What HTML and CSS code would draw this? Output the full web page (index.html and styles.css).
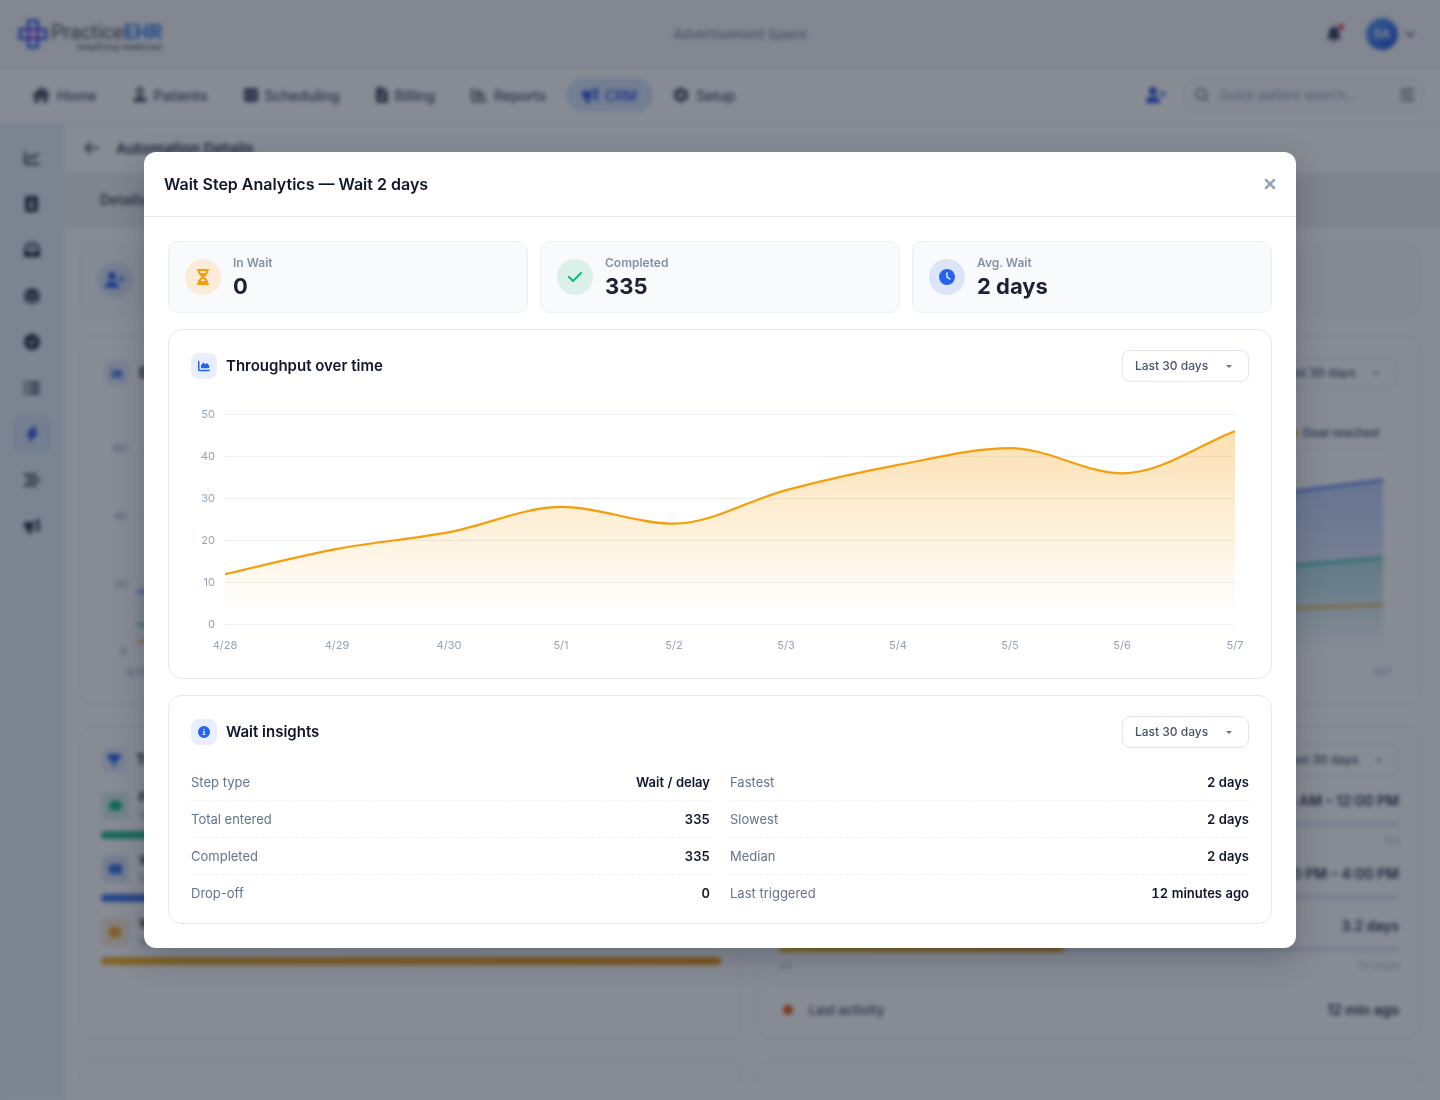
FILE: index.html
```
<!DOCTYPE html>
<html lang="en">
<head>
    <meta charset="UTF-8">
    <meta name="viewport" content="width=device-width, initial-scale=1.0">
    <title>Practice EHR - Automation Details</title>
    <link rel="stylesheet" href="styles.css">
</head>
<body>

<!-- icons -->
<svg class="sprite" aria-hidden="true">
    <symbol id="i-hourglass" viewBox="0 0 384 512"><path d="M32 0C14.3 0 0 14.3 0 32S14.3 64 32 64l0 11c0 42.4 16.9 83.1 46.9 113.1L146.7 256 78.9 323.9C48.9 353.9 32 394.6 32 437l0 11c-17.7 0-32 14.3-32 32s14.3 32 32 32l320 0c17.7 0 32-14.3 32-32s-14.3-32-32-32l0-11c0-42.4-16.9-83.1-46.9-113.1L237.3 256l67.9-67.9c30-30 46.9-70.7 46.9-113.1l0-11c17.7 0 32-14.3 32-32s-14.3-32-32-32L32 0zM96 75l0-11 192 0 0 11c0 19-5.6 37.4-16 53L112 128c-10.3-15.6-16-34-16-53zm16 309c3.5-5.3 7.6-10.3 12.1-14.9L192 301.3l67.9 67.9c4.6 4.6 8.6 9.6 12.1 14.9L112 384z"/></symbol>
    <symbol id="i-check" viewBox="0 0 448 512"><path d="M438.6 105.4c12.5 12.5 12.5 32.8 0 45.3l-256 256c-12.5 12.5-32.8 12.5-45.3 0l-128-128c-12.5-12.5-12.5-32.8 0-45.3s32.8-12.5 45.3 0L160 338.7 393.4 105.4c12.5-12.5 32.8-12.5 45.3 0z"/></symbol>
    <symbol id="i-clock" viewBox="0 0 512 512"><path d="M256 0a256 256 0 1 1 0 512A256 256 0 1 1 256 0zM232 120l0 136c0 8 4 15.5 10.7 20l96 64c11 7.4 25.9 4.4 33.3-6.7s4.4-25.9-6.7-33.3L280 243.2 280 120c0-13.3-10.7-24-24-24s-24 10.7-24 24z"/></symbol>
    <symbol id="i-area" viewBox="0 0 512 512"><path d="M64 64c0-17.7-14.3-32-32-32S0 46.3 0 64L0 400c0 44.2 35.8 80 80 80l400 0c17.7 0 32-14.3 32-32s-14.3-32-32-32L80 416c-8.8 0-16-7.2-16-16L64 64zm96 288l288 0c17.7 0 32-14.3 32-32l0-68.2c0-7.6-2.7-15-7.7-20.8l-65.8-76.8c-12.1-14.2-33.7-15-46.9-1.8l-21 21c-10 10-26.4 9.2-35.4-1.6l-39.2-47c-12.6-15.1-35.7-15.4-48.7-.6L135.9 215c-5.1 5.8-7.9 13.3-7.9 21.1l0 84c0 17.7 14.3 32 32 32z"/></symbol>
    <symbol id="i-info" viewBox="0 0 512 512"><path d="M256 512A256 256 0 1 0 256 0a256 256 0 1 0 0 512zM216 336l24 0 0-64-24 0c-13.3 0-24-10.7-24-24s10.7-24 24-24l48 0c13.3 0 24 10.7 24 24l0 88 8 0c13.3 0 24 10.7 24 24s-10.7 24-24 24l-80 0c-13.3 0-24-10.7-24-24s10.7-24 24-24zm40-208a32 32 0 1 1 0 64 32 32 0 1 1 0-64z"/></symbol>
    <symbol id="i-user-plus" viewBox="0 0 640 512"><path d="M96 128a128 128 0 1 1 256 0A128 128 0 1 1 96 128zM0 482.3C0 383.8 79.8 304 178.3 304l91.4 0C368.2 304 448 383.8 448 482.3c0 16.4-13.3 29.7-29.7 29.7L29.7 512C13.3 512 0 498.7 0 482.3zM504 312l0-64-64 0c-13.3 0-24-10.7-24-24s10.7-24 24-24l64 0 0-64c0-13.3 10.7-24 24-24s24 10.7 24 24l0 64 64 0c13.3 0 24 10.7 24 24s-10.7 24-24 24l-64 0 0 64c0 13.3-10.7 24-24 24s-24-10.7-24-24z"/></symbol>
    <symbol id="i-home" viewBox="0 0 18 16"><path d="M9 0 0 8q.3 1 1.500 1H2.500v5.500Q2.500 16 4 16h3v-5h4v5h3q1.500 0 1.500-1.500V9h1q1.200 0 1.500-1L15 5.300V1.500h-2v2z"/></symbol>
    <symbol id="i-patient" viewBox="0 0 14 16"><circle cx="7" cy="4" r="3" fill="none" stroke="currentColor" stroke-width="2"/><path d="M6 7h2v3h2q4 1 4 5H0q0-4 4-5h2z"/></symbol>
    <symbol id="i-calendar" viewBox="0 0 14 16"><path d="M2 1h10q2 0 2 2v10q0 2-2 2H2q-2 0-2-2V3q0-2 2-2zm1 5v1h3V6zm5 0v1h3V6zm-5 4v1h3v-1zm5 0v1h3v-1z" fill-rule="evenodd"/></symbol>
    <symbol id="i-file" viewBox="0 0 12 16"><path d="M2 0h5v5h5v9q0 2-2 2H2q-2 0-2-2V2q0-2 2-2zm6 0 4 4H8zM5 8v5h2V8z" fill-rule="evenodd"/></symbol>
    <symbol id="i-chart" viewBox="0 0 16 16"><path d="M1 2v10q0 2 2 2h12M5 4h4M5 7h7M5 10h5M13 9v2" fill="none" stroke="currentColor" stroke-width="2" stroke-linecap="round"/></symbol>
    <symbol id="i-line" viewBox="0 0 16 16"><path d="M1 2v10q0 2 2 2h12M4 9l3-3 2.500 2L14 4" fill="none" stroke="currentColor" stroke-width="2" stroke-linecap="round"/></symbol>
    <symbol id="i-horn" viewBox="0 0 16 16"><path d="M2 4h6q4 0 6-3.500 1.500 0 1.500 1V13q0 1-1.500 1-2-3.500-6-3.500H7l1 4.500q0 1-1 1H5q-1 0-1-1l-1-4.500H2q-2 0-2-2V6q0-2 2-2zm11 0q-2 2-4.500 2v3Q11 9 13 11z" fill-rule="evenodd"/></symbol>
    <symbol id="i-gear" viewBox="0 0 16 16"><path d="M6.500 0h3l.5 2.300 2 1.100 2.200-.7 1.500 2.600L14 7v2l1.700 1.700-1.500 2.600-2.200-.7-2 1.100-.5 2.300h-3L6 13.700l-2-1.100-2.200.7-1.500-2.600L2 9V7L.3 5.300l1.500-2.600 2.200.7 2-1.100zM8 5.400a2.600 2.600 0 1 0 0 5.200 2.600 2.600 0 1 0 0-5.200z"/></symbol>
    <symbol id="i-bell" viewBox="0 0 14 16"><path d="M7 0q1 0 1 1.200Q12 2 12 7q0 3 2 5v1H0v-1q2-2 2-5 0-5 4-5.800Q6 0 7 0zM5 14h4q0 2-2 2t-2-2z"/></symbol>
    <symbol id="i-down" viewBox="0 0 12 12"><path d="M2 4l4 4 4-4" fill="none" stroke="currentColor" stroke-width="2"/></symbol>
    <symbol id="i-search" viewBox="0 0 14 14"><path d="M6 1a5 5 0 1 1 0 10A5 5 0 0 1 6 1zM9.500 9.500 13 13" fill="none" stroke="currentColor" stroke-width="2"/></symbol>
    <symbol id="i-sliders" viewBox="0 0 14 14"><path d="M0 2h14M0 7h14M0 12h14M9 0v4M4 5v4M9 10v4" fill="none" stroke="currentColor" stroke-width="2"/></symbol>
    <symbol id="i-back" viewBox="0 0 16 16"><path d="M15 8H2m5-6L1.500 8 7 14" fill="none" stroke="currentColor" stroke-width="2"/></symbol>
    <symbol id="i-contact" viewBox="0 0 16 16"><path d="M3 0h9q2 0 2 2v12q0 2-2 2H3q-2 0-2-2V2q0-2 2-2zm4.500 4a2 2 0 1 0 0 4 2 2 0 1 0 0-4zM4 12h7q0-3-3-3H7q-3 0-3 3z" fill-rule="evenodd"/></symbol>
    <symbol id="i-inbox" viewBox="0 0 16 16"><path d="M1 14V7q0-3 3-5 4-2 8 0 3 2 3 5v7zM1 10h4l1 2h4l1-2h4" fill="none" stroke="currentColor" stroke-width="2"/><path d="M1 10h4l1 2h4l1-2h4v5H1zM5 5h6v2H5z"/></symbol>
    <symbol id="i-layers" viewBox="0 0 16 16"><path d="M8 0l8 3.500L8 7 0 3.500zM0 5l8 3.500L16 5v4L8 12.500 0 9zm0 5.500L8 14l8-3.500V13l-8 3-8-3z"/></symbol>
    <symbol id="i-done" viewBox="0 0 16 16"><path d="M8 0a8 8 0 1 1 0 16A8 8 0 1 1 8 0zM4 8l3 3.500L12 6l-1.300-1.200L7 8.800 5.300 7z" fill-rule="evenodd"/></symbol>
    <symbol id="i-list" viewBox="0 0 16 16"><path d="M0 3h3m2 0h11M0 8h3m2 0h11M0 13h3m2 0h11" fill="none" stroke="currentColor" stroke-width="2.500"/></symbol>
    <symbol id="i-bolt" viewBox="0 0 16 16"><path d="M10.500 0 2 9h4.500L5 16l9-9H9.500L12 1z" stroke="currentColor" stroke-linejoin="round"/></symbol>
    <symbol id="i-bars" viewBox="0 0 16 16"><path d="M0 3h13M3 8h13M0 13h13" fill="none" stroke="currentColor" stroke-width="2.500"/></symbol>
    <symbol id="i-trophy" viewBox="0 0 16 14"><path d="M3 0h10v1h3q0 6-5 7l-2 2v2h2v2H5v-2h2v-2L5 8Q0 7 0 1h3z"/></symbol>
    <symbol id="i-chat" viewBox="0 0 14 12"><path d="M7 0q7 0 7 5.500T7 11q-1.500 0-3-.5L0 12l1.500-3Q0 7.500 0 5.500 0 0 7 0z"/></symbol>
    <symbol id="i-mail" viewBox="0 0 14 12"><path d="M1 1h12l1 1v8l-1 1H1l-1-1V2zm6 6L2 3v1l5 4 5-4V3z" fill-rule="evenodd"/></symbol>
    <symbol id="i-close" viewBox="0 0 12 12"><path d="M2 2l8 8M10 2l-8 8" fill="none" stroke="currentColor" stroke-width="2.500" stroke-linecap="round"/></symbol>
</svg>

<div class="app">
    <header class="topbar">
        <a href="#" class="logo">
            <svg class="logo-mark" viewBox="0 0 30 30" width="30" height="30">
                <path d="M10.500 2h9v26h-9z" stroke="#2563eb"/>
                <path d="M2 10.500h26v9H2z" stroke="#3b5be0"/>
                <path d="M10.500 10.500h9v9h-9z" stroke="#7c3aed"/>
            </svg>
            <span class="logo-text">
                <span class="logo-name">Practice<b>EHR</b></span>
                <span class="logo-tag">Simplifying Healthcare</span>
            </span>
        </a>
        <div class="ad">Advertisement Space</div>
        <div class="account">
            <button class="bell" aria-label="Notifications"><svg width="14" height="16"><use href="#i-bell"/></svg><span class="dot"></span></button>
            <button class="user"><span class="avatar">SA</span><svg width="12" height="12"><use href="#i-down"/></svg></button>
        </div>
    </header>

    <nav class="mainnav">
        <a href="#"><svg width="18" height="16"><use href="#i-home"/></svg>Home</a>
        <a href="#"><svg width="14" height="16"><use href="#i-patient"/></svg>Patients</a>
        <a href="#"><svg width="14" height="16"><use href="#i-calendar"/></svg>Scheduling</a>
        <a href="#"><svg width="12" height="16"><use href="#i-file"/></svg>Billing</a>
        <a href="#"><svg width="16" height="16"><use href="#i-chart"/></svg>Reports</a>
        <a href="#" class="active"><svg width="16" height="16"><use href="#i-horn"/></svg>CRM</a>
        <a href="#"><svg width="16" height="16"><use href="#i-gear"/></svg>Setup</a>
        <button class="add-patient" aria-label="Add patient"><svg width="20" height="16"><use href="#i-user-plus"/></svg></button>
        <div class="search">
            <svg width="14" height="14"><use href="#i-search"/></svg>
            <input type="text" aria-label="Quick patient search" placeholder="Quick patient search...">
            <svg width="14" height="14"><use href="#i-sliders"/></svg>
        </div>
    </nav>

    <div class="layout">
        <aside class="sidebar">
            <a href="#" aria-label="Dashboard"><svg width="18" height="16"><use href="#i-line"/></svg></a>
            <a href="#" aria-label="Contacts"><svg width="16" height="16"><use href="#i-contact"/></svg></a>
            <a href="#" aria-label="Inbox"><svg width="16" height="16"><use href="#i-inbox"/></svg></a>
            <a href="#" aria-label="Segments"><svg width="16" height="16"><use href="#i-layers"/></svg></a>
            <a href="#" aria-label="Tasks"><svg width="16" height="16"><use href="#i-done"/></svg></a>
            <a href="#" aria-label="Lists"><svg width="16" height="16"><use href="#i-list"/></svg></a>
            <a href="#" aria-label="Automations" class="active"><svg width="16" height="16"><use href="#i-bolt"/></svg></a>
            <a href="#" aria-label="Pipelines"><svg width="16" height="16"><use href="#i-bars"/></svg></a>
            <a href="#" aria-label="Campaigns"><svg width="16" height="16"><use href="#i-horn"/></svg></a>
        </aside>

        <main class="page">
            <div class="page-title">
                <a href="#" aria-label="Back"><svg width="16" height="16"><use href="#i-back"/></svg></a>
                <h1>Automation Details</h1>
            </div>
            <div class="tabs"><a href="#">Details</a></div>

            <div class="content">
                <div class="scroll">
                    <section class="summary">
                        <span class="stat-icon blue"><svg width="20" height="16"><use href="#i-user-plus"/></svg></span>
                    </section>

                    <section class="card wide">
                        <div class="panel-head">
                            <span class="panel-icon"><svg width="12" height="12"><use href="#i-area"/></svg></span>
                            <h2>Entries</h2>
                            <div class="range"><select aria-label="Entries range"><option>Last 30 days</option></select></div>
                        </div>
                        <div class="legend"><span class="key"></span>Goal reached</div>
                        <svg class="chart" viewBox="0 0 1292 243">
                            <defs>
                                <linearGradient id="g-blue" x1="0" y1="0" x2="0" y2="1"><stop offset="0" stop-color="#2563eb" stop-opacity=".3"/><stop offset="1" stop-color="#2563eb" stop-opacity="0"/></linearGradient>
                                <linearGradient id="g-green" x1="0" y1="0" x2="0" y2="1"><stop offset="0" stop-color="#10b981" stop-opacity=".2"/><stop offset="1" stop-color="#10b981" stop-opacity="0"/></linearGradient>
                            </defs>
                            <path class="grid" d="M33 6H1279M33 73H1279M33 141H1279M33 209H1279"/>
                            <path fill="url(#g-blue)" d="M33 149 1193 48Q1236 42 1279 37V209H33z"/>
                            <path fill="url(#g-green)" d="M33 182 1193 122 1279 115V209H33z"/>
                            <path class="line blue-line" d="M33 149 1193 48Q1236 42 1279 37"/>
                            <path class="line green-line" d="M33 182 1193 122 1279 115"/>
                            <path class="line amber-line" d="M33 199 1193 165 1279 162"/>
                            <g class="ticks-y"><text x="23" y="9">60</text><text x="23" y="77">40</text><text x="23" y="145">20</text><text x="23" y="212">0</text></g>
                            <g class="ticks-x"><text x="33" y="233">4/10</text><text x="1279" y="233">5/7</text></g>
                        </svg>
                    </section>

                    <div class="columns">
                        <section class="card">
                            <div class="panel-head">
                                <span class="panel-icon"><svg width="14" height="12"><use href="#i-trophy"/></svg></span>
                                <h2>Top</h2>
                            </div>
                            <div class="step">
                                <span class="step-icon green"><svg width="13" height="12"><use href="#i-chat"/></svg></span>
                                <div><strong>Form</strong><small>SMS</small></div>
                            </div>
                            <div class="bar bar-green"></div>
                            <div class="step">
                                <span class="step-icon blue"><svg width="13" height="12"><use href="#i-mail"/></svg></span>
                                <div><strong>Wait</strong><small>Email</small></div>
                            </div>
                            <div class="bar bar-blue"></div>
                            <div class="step">
                                <span class="step-icon amber"><svg width="12" height="12"><use href="#i-clock"/></svg></span>
                                <div><strong>Wait</strong><small>Wait</small></div>
                            </div>
                            <div class="bar bar-amber"></div>
                        </section>

                        <section class="card times">
                            <div class="panel-head">
                                <div class="range"><select aria-label="Timing range"><option>Last 30 days</option></select></div>
                            </div>
                            <div class="timing">
                                <p>9:00 AM – 12:00 PM</p>
                                <div class="track"></div>
                                <div class="scale"><span></span><span>12a</span></div>
                            </div>
                            <div class="timing">
                                <p>2:00 PM – 4:00 PM</p>
                                <div class="track"></div>
                            </div>
                            <div class="timing">
                                <p>3.2 days</p>
                                <div class="track"><div class="fill"></div></div>
                                <div class="scale"><span>0d</span><span>7d target</span></div>
                            </div>
                            <div class="activity"><span class="pin"></span><span>Last activity</span><strong>12 min ago</strong></div>
                        </section>

                        <section class="card next"></section>
                        <section class="card next"></section>
                    </div>
                </div>
            </div>
        </main>
    </div>
</div>

<div class="overlay">
    <div class="modal" role="dialog" aria-modal="true" aria-labelledby="modal-title">
        <div class="modal-head">
            <h2 id="modal-title">Wait Step Analytics — Wait 2 days</h2>
            <button class="close" aria-label="Close"><svg width="12" height="12"><use href="#i-close"/></svg></button>
        </div>

        <div class="modal-body">
            <div class="stats">
                <div class="stat">
                    <span class="stat-icon amber"><svg width="12" height="16"><use href="#i-hourglass"/></svg></span>
                    <div><span class="stat-label">In Wait</span><span class="stat-value">0</span></div>
                </div>
                <div class="stat">
                    <span class="stat-icon green"><svg width="14" height="16"><use href="#i-check"/></svg></span>
                    <div><span class="stat-label">Completed</span><span class="stat-value">335</span></div>
                </div>
                <div class="stat">
                    <span class="stat-icon blue"><svg width="16" height="16"><use href="#i-clock"/></svg></span>
                    <div><span class="stat-label">Avg. Wait</span><span class="stat-value">2 days</span></div>
                </div>
            </div>

            <section class="panel">
                <div class="panel-head">
                    <span class="panel-icon"><svg width="12" height="12"><use href="#i-area"/></svg></span>
                    <h3>Throughput over time</h3>
                    <div class="range"><select aria-label="Throughput range"><option>Last 30 days</option><option>Last 7 days</option></select></div>
                </div>
                <svg class="chart" viewBox="0 0 1058 268">
                    <defs>
                        <linearGradient id="g-amber" gradientUnits="userSpaceOnUse" x1="0" y1="33" x2="0" y2="216"><stop offset="0" stop-color="#f59e0b" stop-opacity=".32"/><stop offset="1" stop-color="#f59e0b" stop-opacity="0"/></linearGradient>
                    </defs>
                    <path class="grid" d="M34 16.500H1044M34 58.500H1044M34 100.500H1044M34 142.500H1044M34 184.500H1044M34 226.500H1044"/>
                    <path fill="url(#g-amber)" d="M34 176.100C71.400 167.700 108.800 157.900 146.200 150.900C183.600 143.900 221 141.100 258.400 134.100C295.800 127.100 333.300 108.900 370.700 108.900C408.100 108.900 445.500 125.700 482.900 125.700C520.300 125.700 557.700 101.900 595.100 92.100C632.500 82.300 669.900 73.900 707.300 66.900C744.700 59.900 782.200 50.100 819.600 50.100C857 50.100 894.400 75.300 931.800 75.300C969.200 75.300 1006.600 47.300 1044 33.300V226.500H34z"/>
                    <path class="line amber-line" d="M34 176.100C71.400 167.700 108.800 157.900 146.200 150.900C183.600 143.900 221 141.100 258.400 134.100C295.800 127.100 333.300 108.900 370.700 108.900C408.100 108.900 445.500 125.700 482.900 125.700C520.300 125.700 557.700 101.900 595.100 92.100C632.500 82.300 669.900 73.900 707.300 66.900C744.700 59.900 782.200 50.100 819.600 50.100C857 50.100 894.400 75.300 931.800 75.300C969.200 75.300 1006.600 47.300 1044 33.300"/>
                    <g class="ticks-y">
                        <text x="24" y="20">50</text><text x="24" y="62">40</text><text x="24" y="104">30</text>
                        <text x="24" y="146">20</text><text x="24" y="188">10</text><text x="24" y="230">0</text>
                    </g>
                    <g class="ticks-x">
                        <text x="34" y="251">4/28</text><text x="146" y="251">4/29</text><text x="258" y="251">4/30</text>
                        <text x="370" y="251">5/1</text><text x="483" y="251">5/2</text><text x="595" y="251">5/3</text>
                        <text x="707" y="251">5/4</text><text x="819" y="251">5/5</text><text x="931" y="251">5/6</text>
                        <text x="1044" y="251">5/7</text>
                    </g>
                </svg>
            </section>

            <section class="panel">
                <div class="panel-head">
                    <span class="panel-icon"><svg width="12" height="12"><use href="#i-info"/></svg></span>
                    <h3>Wait insights</h3>
                    <div class="range"><select aria-label="Insights range"><option>Last 30 days</option><option>Last 7 days</option></select></div>
                </div>
                <div class="insights">
                    <dl>
                        <div><dt>Step type</dt><dd>Wait / delay</dd></div>
                        <div><dt>Total entered</dt><dd>335</dd></div>
                        <div><dt>Completed</dt><dd>335</dd></div>
                        <div><dt>Drop-off</dt><dd>0</dd></div>
                    </dl>
                    <dl>
                        <div><dt>Fastest</dt><dd>2 days</dd></div>
                        <div><dt>Slowest</dt><dd>2 days</dd></div>
                        <div><dt>Median</dt><dd>2 days</dd></div>
                        <div><dt>Last triggered</dt><dd>12 minutes ago</dd></div>
                    </dl>
                </div>
            </section>
        </div>
    </div>
</div>

</body>
</html>
```
FILE: styles.css
```
* {
    box-sizing: border-box;
}
body {
    margin: 0;
    font-family: Inter, sans-serif;
    font-size: 14px;
    color: #0f172a;
    background: #fff;
}
h1, h2, h3, p, dl, dd {
    margin: 0;
}
a {
    color: inherit;
    text-decoration: none;
}
button {
    padding: 0;
    border: none;
    background: none;
    font-family: inherit;
    color: inherit;
    cursor: pointer;
}
svg {
    display: block;
    flex: none;
    fill: currentColor;
}
.sprite {
    display: none;
}

/* page behind the modal */
.app {
    height: 100vh;
    display: flex;
    flex-direction: column;
    overflow: hidden;
}
.topbar {
    height: 69px;
    flex: none;
    display: flex;
    align-items: center;
    padding: 0 24px 0 18px;
    background: #f4f6fa;
    border-bottom: 1px solid #f1f0f8;
}
.logo {
    display: flex;
    align-items: center;
    gap: 3px;
}
.logo-mark {
    fill: none;
    stroke-width: 3;
}
.logo-text {
    display: flex;
    flex-direction: column;
    align-items: flex-end;
    padding-top: 4px;
}
.logo-name {
    font-family: Roboto, sans-serif;
    font-size: 20px;
    line-height: 22px;
    color: #555;
}
.logo-name b {
    color: #2f7bea;
}
.logo-tag {
    font-size: 8px;
    line-height: 8px;
    color: #444;
}
.ad {
    flex: 1;
    text-align: center;
    font-size: 13px;
    font-weight: 500;
    color: #8a94a6;
}
.account {
    display: flex;
    align-items: center;
    gap: 16px;
}
.bell {
    position: relative;
    width: 32px;
    height: 32px;
    display: flex;
    align-items: center;
    justify-content: center;
    color: #334155;
}
.dot {
    position: absolute;
    top: 6px;
    right: 6px;
    width: 6px;
    height: 6px;
    border-radius: 50%;
    background: #ef4444;
}
.user {
    display: flex;
    align-items: center;
    gap: 6px;
    color: #64748b;
}
.avatar {
    width: 32px;
    height: 32px;
    border-radius: 50%;
    background: linear-gradient(135deg, #60a5fa, #1d4ed8);
    color: #fff;
    font-size: 12px;
    font-weight: 600;
    line-height: 32px;
}
.mainnav {
    height: 55px;
    flex: none;
    display: flex;
    align-items: center;
    gap: 4px;
    padding: 0 16px 2px;
    border-bottom: 1px solid #e8eaf0;
    color: #475569;
}
.mainnav a {
    height: 34px;
    display: flex;
    align-items: center;
    gap: 7px;
    padding: 0 16px;
    border-radius: 17px;
    font-weight: 500;
}
.mainnav .active {
    background: #d6e6fb;
    color: #2554e0;
}
.add-patient {
    margin-left: auto;
    margin-right: 13px;
    color: #2554e0;
}
.search {
    width: 241px;
    height: 36px;
    display: flex;
    align-items: center;
    gap: 10px;
    padding: 0 9px 0 11px;
    border: 1px solid #e6e9ef;
    border-radius: 18px;
    background: #fafbfd;
    color: #7b8798;
}
.search input {
    flex: 1;
    min-width: 0;
    padding: 0;
    border: none;
    background: none;
    font-family: inherit;
    font-size: 13px;
}
.search input::placeholder {
    color: #94a3b8;
}
.layout {
    flex: 1;
    min-height: 0;
    display: flex;
}
.sidebar {
    width: 65px;
    flex: none;
    display: flex;
    flex-direction: column;
    align-items: center;
    gap: 6px;
    padding: 14px 1px 0 0;
    background: #e9f1fa;
    color: #253044;
}
.sidebar a {
    width: 38px;
    height: 40px;
    display: flex;
    align-items: center;
    justify-content: center;
    border-radius: 8px;
}
.sidebar .active {
    background: #d8e6f8;
    color: #2554e0;
}
.page {
    flex: 1;
    min-width: 0;
    display: flex;
    flex-direction: column;
}
.page-title {
    height: 48px;
    flex: none;
    display: flex;
    align-items: center;
    gap: 16px;
    padding: 0 19px;
    color: #475569;
}
.page-title h1 {
    font-size: 15px;
    font-weight: 600;
    color: #334155;
}
.tabs {
    height: 56px;
    flex: none;
    display: flex;
    align-items: center;
    padding: 0 35px 2px;
    background: #f1f1f2;
    color: #52525b;
    font-weight: 600;
}
.content {
    flex: 1;
    min-height: 0;
    padding: 16px 20px 16px 15px;
}
.scroll {
    height: 100%;
    display: flex;
    flex-direction: column;
    gap: 20px;
    overflow: hidden;
}
.summary {
    height: 72px;
    flex: none;
    display: flex;
    align-items: center;
    padding: 0 16px;
    border: 1px solid #e6e8ee;
    border-radius: 10px;
    background: #fafbfd;
}
.card {
    padding: 18px 20px 16px;
    border: 1px solid #e6e8ee;
    border-radius: 14px;
}
.wide {
    padding: 20px 23px 18px;
}
.wide .panel-head {
    margin-bottom: 34px;
}
.legend {
    display: flex;
    align-items: center;
    justify-content: flex-end;
    gap: 6px;
    padding-right: 17px;
    font-size: 12px;
    font-weight: 500;
    line-height: 20px;
    color: #475569;
}
.key {
    width: 8px;
    height: 8px;
    border-radius: 50%;
    background: #f59e0b;
}
.columns {
    display: grid;
    grid-template-columns: 1fr 1fr;
    gap: 20px 16px;
}
.card.next {
    height: 300px;
}
.step {
    display: flex;
    align-items: center;
    gap: 10px;
    height: 28px;
}
.step strong, .step small {
    display: block;
    font-size: 13px;
    font-weight: 600;
    line-height: 18px;
}
.step small {
    font-size: 11px;
    font-weight: 400;
    color: #94a3b8;
}
.step-icon {
    width: 28px;
    height: 28px;
    display: flex;
    align-items: center;
    justify-content: center;
    border-radius: 6px;
}
.bar {
    height: 8px;
    margin: 11px 0 16px;
    border-radius: 4px;
}
.bar-green {
    background: #22b98a;
}
.bar-blue {
    background: #3b76ea;
}
.bar-amber {
    background: linear-gradient(90deg, #f0b020, #f0980b);
}
.times .panel-head {
    margin-bottom: 13px;
}
.timing {
    margin-bottom: 14px;
}
.timing p {
    font-size: 14px;
    font-weight: 600;
    line-height: 24px;
    text-align: right;
    color: #334155;
}
.track {
    height: 6px;
    margin-top: 8px;
    border-radius: 3px;
    background: #e6ebf3;
}
.fill {
    width: 46%;
    height: 6px;
    border-radius: 3px;
    background: linear-gradient(90deg, #eab308, #e08a0b);
}
.scale {
    display: flex;
    justify-content: space-between;
    margin-top: 5px;
    font-size: 10px;
    line-height: 16px;
    color: #b6bfcc;
}
.activity {
    display: flex;
    align-items: center;
    padding-top: 10px;
    border-top: 1px solid #eceff4;
    line-height: 24px;
    font-size: 13px;
    font-weight: 500;
    color: #475569;
}
.activity strong {
    margin-left: auto;
    font-size: 14px;
    font-weight: 600;
    color: #334155;
}
.pin {
    width: 10px;
    height: 10px;
    margin: 0 16px 0 4px;
    border-radius: 50%;
    background: #ea580c;
}

/* modal */
.overlay {
    position: fixed;
    inset: 0;
    display: flex;
    align-items: center;
    justify-content: center;
    background: rgba(15, 23, 42, 0.5);
    backdrop-filter: blur(2px);
}
.modal {
    width: 80%;
    max-height: 92vh;
    border-radius: 12px;
    background: #fff;
    box-shadow: 0 10px 30px rgba(15, 23, 42, 0.25);
    overflow: hidden;
}
.modal-head {
    display: flex;
    align-items: center;
    justify-content: space-between;
    padding: 20px;
    border-bottom: 1px solid #e5e7eb;
}
.modal-head h2 {
    font-size: 16px;
    font-weight: 600;
    line-height: 24px;
}
.close {
    color: #94a3b8;
}
.modal-body {
    display: flex;
    flex-direction: column;
    gap: 16px;
    padding: 24px;
}
.stats {
    display: grid;
    grid-template-columns: repeat(3, 1fr);
    gap: 12px;
}
.stat {
    display: flex;
    align-items: center;
    gap: 12px;
    padding: 12px 16px;
    border: 1px solid #eef0f4;
    border-radius: 10px;
    background: #f9fafc;
}
.stat-icon {
    width: 36px;
    height: 36px;
    display: flex;
    align-items: center;
    justify-content: center;
    border-radius: 50%;
}
.amber {
    background: #faecd8;
    color: #f59e0b;
}
.green {
    background: #d9f1e9;
    color: #10b981;
}
.blue {
    background: #dce5f8;
    color: #2563eb;
}
.stat-label, .stat-value {
    display: block;
}
.stat-label {
    font-size: 12px;
    font-weight: 600;
    line-height: 18px;
    color: #8492a6;
}
.stat-value {
    font-size: 22px;
    font-weight: 700;
    line-height: 28px;
    color: #1a2233;
}
.panel {
    padding: 20px 22px 12px;
    border: 1px solid #e6e8f0;
    border-radius: 14px;
}
.panel-head {
    display: flex;
    align-items: center;
    gap: 9px;
    height: 32px;
    margin-bottom: 16px;
}
.panel-head h2, .panel-head h3 {
    font-size: 15px;
    font-weight: 600;
    line-height: 22px;
}
.panel-icon {
    width: 26px;
    height: 26px;
    display: flex;
    align-items: center;
    justify-content: center;
    border-radius: 8px;
    background: #e8eefd;
    color: #2563eb;
}
.range {
    position: relative;
    margin-left: auto;
}
.range::after {
    content: "";
    position: absolute;
    top: 15px;
    right: 17px;
    border: 3px solid transparent;
    border-top-color: #64748b;
    border-bottom: none;
    pointer-events: none;
}
.range select {
    width: 127px;
    height: 32px;
    padding: 0 12px 2px;
    border: 1px solid #e2e5ec;
    border-radius: 8px;
    background: #fff;
    appearance: none;
    font-family: inherit;
    font-size: 12px;
    font-weight: 500;
    color: #475569;
}
.chart {
    width: 100%;
    height: auto;
}
.chart text {
    font-size: 11px;
    fill: #94a3b8;
}
.ticks-y {
    text-anchor: end;
}
.ticks-x {
    text-anchor: middle;
}
.grid {
    stroke: #eef0f5;
}
.line {
    fill: none;
    stroke-width: 2.2;
}
.amber-line {
    stroke: #f59e0b;
}
.blue-line {
    stroke: #2563eb;
}
.green-line {
    stroke: #10b981;
}
.insights {
    display: grid;
    grid-template-columns: 1fr 1fr;
    gap: 20px;
}
.insights div {
    display: flex;
    justify-content: space-between;
    padding: 10px 0;
    border-bottom: 1px dashed #eef1f6;
    font-size: 13px;
    line-height: 16px;
}
.insights div:last-child {
    border-bottom: none;
}
.insights dt {
    color: #64748b;
}
.insights dd {
    font-weight: 600;
    font-variant-numeric: tabular-nums;
}
```
